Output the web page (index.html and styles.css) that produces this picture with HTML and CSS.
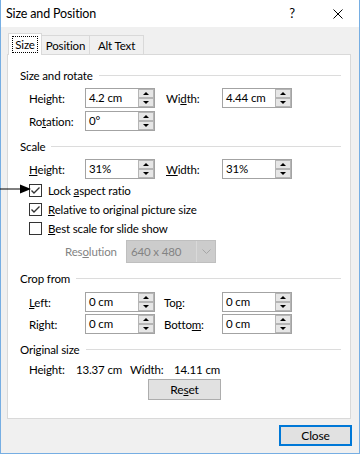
FILE: index.html
```html
<!DOCTYPE html>
<html>
  <head>
    <title>Size and Position</title>
    <link rel="stylesheet" href="styles.css">
  </head>
  <body>
    <div class="window">
      <div class="titlebar">
        <span class="title">Size and Position</span>
        <span class="help">?</span>
        <svg class="close-x" width="10" height="10" viewBox="0 0 10 10">
          <path d="M0.5 0.5 L9.5 9.5 M9.5 0.5 L0.5 9.5" stroke="#000" stroke-width="1" fill="none" />
        </svg>
      </div>

      <!-- annotation arrow pointing at the lock checkbox -->
      <svg class="pointer" width="32" height="10" viewBox="0 0 32 10">
        <path d="M0 5 H22" stroke="#000" stroke-width="1" />
        <path d="M20 0.5 L31 5 L20 9.5 Z" fill="#000" />
      </svg>

      <div class="content">
        <div class="tabs">
          <div class="tab active"><span class="focus">Size</span></div>
          <div class="tab">Position</div>
          <div class="tab">Alt Text</div>
        </div>

        <div class="panel">
          <div class="group-title first">Size and rotate</div>
          <div class="grid">
            <label>Hei<u>g</u>ht:</label>
            <div class="spin"><span class="value">4.2 cm</span><span class="arrows"><i class="up"></i><i class="down"></i></span></div>
            <label class="second">Wi<u>d</u>th:</label>
            <div class="spin"><span class="value">4.44 cm</span><span class="arrows"><i class="up"></i><i class="down"></i></span></div>
            <label>Ro<u>t</u>ation:</label>
            <div class="spin"><span class="value">0°</span><span class="arrows"><i class="up"></i><i class="down"></i></span></div>
          </div>

          <div class="group-title">Scale</div>
          <div class="grid">
            <label><u>H</u>eight:</label>
            <div class="spin"><span class="value">31%</span><span class="arrows"><i class="up"></i><i class="down"></i></span></div>
            <label class="second"><u>W</u>idth:</label>
            <div class="spin"><span class="value">31%</span><span class="arrows"><i class="up"></i><i class="down"></i></span></div>
          </div>

          <div class="checks">
            <div class="check-row">
              <span class="box checked"><svg width="11" height="11" viewBox="0 0 11 11"><path d="M1.5 5.5 L4 8 L9.5 2.5" stroke="#333" stroke-width="1.4" fill="none" /></svg></span>
              <span>Lock <u>a</u>spect ratio</span>
            </div>
            <div class="check-row">
              <span class="box checked"><svg width="11" height="11" viewBox="0 0 11 11"><path d="M1.5 5.5 L4 8 L9.5 2.5" stroke="#333" stroke-width="1.4" fill="none" /></svg></span>
              <span><u>R</u>elative to original picture size</span>
            </div>
            <div class="check-row">
              <span class="box"></span>
              <span><u>B</u>est scale for slide show</span>
            </div>
          </div>

          <div class="resolution">
            <span class="res-label">Res<u>o</u>lution</span>
            <div class="combo">
              <span class="combo-value">640 x 480</span>
              <span class="combo-btn">
                <svg width="9" height="5" viewBox="0 0 9 5"><path d="M0.5 0.5 L4.5 4.5 L8.5 0.5" stroke="#a6a6a6" stroke-width="1" fill="none" /></svg>
              </span>
            </div>
          </div>

          <div class="group-title">Crop from</div>
          <div class="grid crop">
            <label><u>L</u>eft:</label>
            <div class="spin"><span class="value">0 cm</span><span class="arrows"><i class="up"></i><i class="down"></i></span></div>
            <label class="second">To<u>p</u>:</label>
            <div class="spin"><span class="value">0 cm</span><span class="arrows"><i class="up"></i><i class="down"></i></span></div>
            <label>Ri<u>g</u>ht:</label>
            <div class="spin"><span class="value">0 cm</span><span class="arrows"><i class="up"></i><i class="down"></i></span></div>
            <label class="second">Botto<u>m</u>:</label>
            <div class="spin"><span class="value">0 cm</span><span class="arrows"><i class="up"></i><i class="down"></i></span></div>
          </div>

          <div class="group-title">Original size</div>
          <div class="original">
            <span class="o-label">Height:</span>
            <span class="o-value">13.37 cm</span>
            <span class="o-label2">Width:</span>
            <span>14.11 cm</span>
          </div>
          <div class="reset-row">
            <button class="btn">Re<u>s</u>et</button>
          </div>
        </div>

        <div class="footer">
          <button class="btn default">Close</button>
        </div>
      </div>
    </div>
  </body>
</html>
```

FILE: styles.css
```css
body {
  margin: 0;
  background-color: #f0f0f0;
  font-family: Lato, "Noto Sans", Arial, sans-serif;
  font-size: 11.5px;
  letter-spacing: -0.15px;
  color: #000;
}

.window {
  position: relative;
  width: 360px;
  height: 454px;
  box-sizing: border-box;
  border-left: 1px solid #76aee3;
  border-right: 1px solid #76aee3;
  border-bottom: 1px solid #76aee3;
  background-color: #f0f0f0;
}

.titlebar {
  height: 27px;
  background-color: #fff;
  display: flex;
  align-items: center;
  padding-left: 5px;
}

.title {
  flex: 1;
  font-size: 12.5px;
  margin-top: -1px;
}

.help {
  font-size: 13px;
  margin-right: 38px;
  margin-top: -1px;
}

.close-x {
  margin-right: 16px;
}

.pointer {
  position: absolute;
  left: -1px;
  top: 184px;
}

.content {
  padding: 6px 8px 0 6px;
}

/* tabs */
.tabs {
  display: flex;
  align-items: flex-end;
  height: 21px;
  margin-left: 1px;
}

.tab {
  height: 19px;
  box-sizing: border-box;
  border: 1px solid #d9d9d9;
  border-bottom: none;
  background-color: #f0f0f0;
  display: flex;
  align-items: center;
  justify-content: center;
  margin-left: -1px;
}

.tab:nth-child(2) {
  width: 49px;
}

.tab:nth-child(3) {
  width: 55px;
}

.tab.active {
  width: 34px;
  height: 22px;
  margin-left: 0;
  margin-bottom: -1px;
  background-color: #fff;
  position: relative;
  z-index: 1;
}

.focus {
  border: 1px dotted #000;
  padding: 0 2px;
  line-height: 15px;
}

/* panel */
.panel {
  height: 365px;
  box-sizing: border-box;
  border: 1px solid #d9d9d9;
  background-color: #fff;
  padding: 0 9px 0 12px;
}

.group-title {
  display: flex;
  align-items: center;
  height: 16px;
  margin-top: 7px;
}

.group-title.first {
  margin-top: 12px;
}

.group-title::after {
  content: "";
  flex: 1;
  height: 1px;
  background-color: #dcdcdc;
  margin-left: 6px;
}

.grid {
  display: grid;
  grid-template-columns: 56px 70px 67px 70px;
  grid-auto-rows: 20px;
  row-gap: 3px;
  margin: 5px 0 0 9px;
  align-items: center;
}

.grid.crop {
  row-gap: 2px;
  margin-top: 6px;
}

.grid .second {
  padding-left: 11px;
}

.grid.crop .second {
  padding-left: 9px;
}

.spin {
  height: 20px;
  box-sizing: border-box;
  border: 1px solid #a3a3a3;
  display: flex;
  background-color: #fff;
}

.spin .value {
  flex: 1;
  padding-left: 3px;
  line-height: 18px;
}

.arrows {
  width: 16px;
  display: flex;
  flex-direction: column;
}

.arrows i {
  flex: 1;
  box-sizing: border-box;
  border: 1px solid #b5b5b5;
  background-color: #e6e6e6;
  display: flex;
  align-items: center;
  justify-content: center;
}

.arrows i::after {
  content: "";
  border-left: 3px solid transparent;
  border-right: 3px solid transparent;
}

.arrows .up::after {
  border-bottom: 3px solid #000;
}

.arrows .down::after {
  border-top: 3px solid #000;
}

/* checkboxes */
.checks {
  margin: 2px 0 0 9px;
}

.check-row {
  height: 19px;
  display: flex;
  align-items: center;
}

.box {
  width: 13px;
  height: 13px;
  box-sizing: border-box;
  border: 1px solid #333;
  background-color: #fff;
  margin-right: 6px;
  display: flex;
  align-items: center;
  justify-content: center;
}

/* resolution combo (disabled) */
.resolution {
  display: flex;
  align-items: center;
  margin: 2px 0 0 45px;
}

.res-label {
  width: 61px;
  color: #838383;
}

.combo {
  width: 90px;
  height: 23px;
  box-sizing: border-box;
  border: 1px solid #bfbfbf;
  background-color: #cccccc;
  display: flex;
  align-items: center;
  color: #838383;
}

.combo-value {
  flex: 1;
  padding-left: 4px;
}

.combo-btn {
  width: 18px;
  height: 100%;
  border-left: 1px solid #d9d9d9;
  display: flex;
  align-items: center;
  justify-content: center;
}

/* original size */
.original {
  display: flex;
  align-items: center;
  height: 16px;
  margin: 4px 0 0 9px;
}

.o-label {
  width: 47px;
}

.o-value {
  width: 54px;
}

.o-label2 {
  width: 44px;
}

.reset-row {
  margin: 2px 0 0 128px;
}

.btn {
  width: 73px;
  height: 21px;
  box-sizing: border-box;
  border: 1px solid #adadad;
  background-color: #e1e1e1;
  font-family: inherit;
  font-size: 12px;
  letter-spacing: inherit;
  color: #000;
  padding: 0;
}

.footer {
  display: flex;
  justify-content: flex-end;
  margin: 6px -1px 0 0;
}

.btn.default {
  border: 2px solid #0078d7;
}
```
